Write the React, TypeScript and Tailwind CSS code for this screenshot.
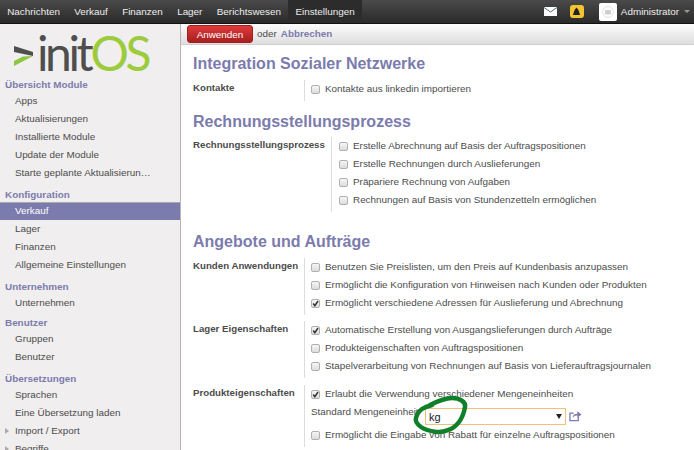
const menus = ["Nachrichten", "Verkauf", "Finanzen", "Lager", "Berichtswesen"]

const sidebar = [
  { title: "Übersicht Module", gap: "mb-[4px]", items: ["Apps", "Aktualisierungen", "Installierte Module", "Update der Module", "Starte geplante Aktualisierun…"] },
  { title: "Konfiguration", gap: "mb-[4px]", items: ["Verkauf", "Lager", "Finanzen", "Allgemeine Einstellungen"] },
  { title: "Unternehmen", gap: "mb-[2px]", items: ["Unternehmen"] },
  { title: "Benutzer", gap: "mb-[4px]", items: ["Gruppen", "Benutzer"] },
  { title: "Übersetzungen", gap: "mb-[4px]", items: ["Sprachen", "Eine Übersetzung laden", "Import / Export", "Begriffe"] },
]

function Check({ checked, label }: { checked?: boolean; label: string }) {
  return (
    <div className="flex h-[18px] items-center">
      <span className="relative mr-[5px] h-[9px] w-[9px] shrink-0 rounded-[2px] border border-[#b0b0b0] bg-gradient-to-b from-[#f6f6f6] to-[#dcdcdc]">
        {checked && (
          <svg viewBox="0 0 10 10" className="absolute left-[-1px] top-[-1px] h-[9px] w-[9px]">
            <path d="M2.5 5 L4.3 7.5 L7.8 2.2" fill="none" stroke="#333" strokeWidth="1.6" />
          </svg>
        )}
      </span>
      <span>{label}</span>
    </div>
  )
}

function Row({ label, wide, className, children }: { label: string; wide?: boolean; className?: string; children: React.ReactNode }) {
  return (
    <div className={`flex ${className ?? ""}`}>
      <div className={`${wide ? "w-[138px]" : "w-[111px]"} shrink-0 text-[9.7px] font-bold leading-[16px] text-[#4c4c4c]`}>{label}</div>
      <div className={`border-l border-[#dcdcdc] pb-[3px] ${wide ? "pl-[7px]" : "pl-[6px]"}`}>{children}</div>
    </div>
  )
}

function Heading({ children, className }: { children: React.ReactNode; className?: string }) {
  return <h2 className={`text-[16px] font-bold leading-[20px] text-[#7c7bad] ${className ?? ""}`}>{children}</h2>
}

export default function App() {
  return (
    <div className="flex h-[450px] w-[694px] flex-col overflow-hidden bg-white font-['Liberation_Sans',Arial,sans-serif] text-[9.9px] leading-[18px] text-[#4c4c4c]">
      {/* top menu */}
      <div className="flex h-[23px] shrink-0 items-center justify-between bg-gradient-to-b from-[#4a4a4a] to-[#2a2a2a] text-[#eeeeee]">
        <div className="flex h-full">
          {menus.map((m) => (
            <div key={m} className="flex h-full items-center px-[7.2px]">{m}</div>
          ))}
          <div className="flex h-full items-center bg-[#2c2c2c] px-[7.2px]">Einstellungen</div>
        </div>
        <div className="flex items-center">
          <svg viewBox="0 0 13 9" className="mr-[13px] h-[9px] w-[13px]">
            <rect width="13" height="9" fill="#fff" />
            <path d="M0 0.5 L6.5 5 L13 0.5" fill="none" stroke="#5a6a7a" />
          </svg>
          <span className="mr-[15px] flex h-[13px] w-[14px] items-center justify-center rounded-[3px] bg-[#f4c430]">
            <svg viewBox="0 0 10 10" className="h-[9px] w-[9px]"><path d="M5 0.5 L7 3 L9 9 L1 9 L3 3 Z" fill="#222" /></svg>
          </span>
          <span className="mr-[4px] flex h-[18px] w-[18px] items-center justify-center rounded-[2px] bg-white">
            <svg viewBox="0 0 12 12" className="h-[12px] w-[12px]">
              <circle cx="6" cy="6" r="5.4" fill="none" stroke="#e2e2e2" />
              <rect x="3" y="4" width="6" height="4.5" rx="0.6" fill="#cfcfcf" />
            </svg>
          </span>
          <span className="mr-[5px]">Administrator</span>
          <span className="mr-[4px] h-0 w-0 border-x-[3px] border-t-[3px] border-x-transparent border-t-[#999]" />
        </div>
      </div>
      <div className="flex min-h-0 flex-1 border-t border-[#111]">
        {/* sidebar */}
        <div className="w-[181px] shrink-0 overflow-hidden border-r border-[#b5b5b5] bg-[#f0eeee]">
          <div className="flex h-[52px] items-start pl-[14px] pt-[5px]">
            <svg viewBox="0 0 19 20" className="mr-[4px] mt-[17px] h-[20px] w-[19px] shrink-0">
              <path d="M0 0 L19 6 L19 10 L0 6 Z" fill="#4e4e4e" />
              <path d="M19 10 L0 20 L0 15 L9 10.5 Z" fill="#8cc63f" />
            </svg>
            <span className="mt-[2px] font-['Lato',sans-serif] text-[48px] font-normal leading-[44px] tracking-[-3.4px] text-[#4e4e4e]">
              init<span className="text-[#9ccb3b]">OS</span>
            </span>
          </div>
          {sidebar.map((s) => (
            <div key={s.title} className={s.gap}>
              <div className="h-[16px] pl-[5px] pt-[2px] font-bold leading-[14px] text-[#7c7bad]">{s.title}</div>
              {s.items.map((it) => (
                <div key={it} className={`relative h-[18px] pl-[15px] leading-[18px] ${it === "Verkauf" ? "bg-[#7c7bad] text-white shadow-[inset_0_1px_0_#aaa]" : ""}`}>
                  {(it === "Import / Export" || it === "Begriffe") && (
                    <span className="absolute left-[5px] top-[6px] h-0 w-0 border-y-[3px] border-l-[4px] border-y-transparent border-l-[#aaa]" />
                  )}
                  {it}
                </div>
              ))}
            </div>
          ))}
        </div>
        {/* content */}
        <div className="relative min-w-0 flex-1">
          <div className="flex h-[21px] items-center border-b border-[#cfcfcf] bg-gradient-to-b from-[#fcfcfc] to-[#dedede] pl-[6px]">
            <button className="h-[18px] w-[66px] rounded-[3px] border border-[#a02020] bg-gradient-to-b from-[#df3a3a] to-[#a81f1f] text-[9.9px] text-white">Anwenden</button>
            <span className="ml-[4px]">oder</span>
            <span className="ml-[4px] font-bold text-[#7c7bad]">Abbrechen</span>
          </div>
          <div className="pl-[12px] pt-[9px]">
            <Heading>Integration Sozialer Netzwerke</Heading>
            <Row label="Kontakte" className="mt-[6px]">
              <Check label="Kontakte aus linkedin importieren" />
            </Row>
            <Heading className="mt-[11px]">Rechnungsstellungsprozess</Heading>
            <Row label="Rechnungsstellungsprozess" wide className="mt-[5px]">
              <Check label="Erstelle Abrechnung auf Basis der Auftragspositionen" />
              <Check label="Erstelle Rechnungen durch Auslieferungen" />
              <Check label="Präpariere Rechnung von Aufgaben" />
              <Check label="Rechnungen auf Basis von Stundenzetteln ermöglichen" />
            </Row>
            <Heading className="mt-[20px]">Angebote und Aufträge</Heading>
            <Row label="Kunden Anwendungen" className="mt-[6px]">
              <Check label="Benutzen Sie Preislisten, um den Preis auf Kundenbasis anzupassen" />
              <Check label="Ermöglicht die Konfiguration von Hinweisen nach Kunden oder Produkten" />
              <Check checked label="Ermöglicht verschiedene Adressen für Auslieferung und Abrechnung" />
            </Row>
            <Row label="Lager Eigenschaften" className="mt-[6px]">
              <Check checked label="Automatische Erstellung von Ausgangslieferungen durch Aufträge" />
              <Check label="Produkteigenschaften von Auftragspositionen" />
              <Check label="Stapelverarbeitung von Rechnungen auf Basis von Lieferauftragsjournalen" />
            </Row>
            <Row label="Produkteigenschaften" className="mt-[7px]">
              <Check checked label="Erlaubt die Verwendung verschiedener Mengeneinheiten" />
              <div className="flex h-[23px] items-start">
                <span className="w-[114px] shrink-0">Standard Mengeneinheit</span>
                <div className="mt-[5px] flex h-[17px] w-[141px] items-center justify-between border border-[#eec27a] bg-white pl-[3px] pr-[2px] text-[11px] text-[#222]">
                  kg
                  <span className="mr-[1px] h-0 w-0 border-x-[3px] border-t-[5px] border-x-transparent border-t-[#222]" />
                </div>
                <svg viewBox="0 0 14 12" className="ml-[3px] mt-[7px] h-[12px] w-[13px]">
                  <path d="M10 7 V11 H1 V3 H5" fill="none" stroke="#7c7bad" strokeWidth="1.4" />
                  <path d="M4 8 C4 5 6 3.5 9 3.5 V1 L13.5 4.5 L9 8 V5.5 C7 5.5 5.2 6 4 8 Z" fill="#7c7bad" />
                </svg>
              </div>
              <Check label="Ermöglicht die Eingabe von Rabatt für einzelne Auftragspositionen" />
            </Row>
          </div>
          {/* hand drawn marker over the select */}
          <svg viewBox="0 0 60 44" className="pointer-events-none absolute left-[229px] top-[370px] h-[44px] w-[60px]">
            <path d="M20 11 C24 9 34 4 42 4 C50 4 56 8 55 13 C54 19 52 24 49 28 C46 32 42 35 38 36 C34 38 30 38 26 38 C20 37 14 35 11 33 C7 30 5 27 6 24 C7 20 9 17 12 15 C15 13 18 12 22 11" fill="none" stroke="#0f8029" strokeWidth="4.5" strokeLinecap="round" />
          </svg>
        </div>
      </div>
    </div>
  )
}
